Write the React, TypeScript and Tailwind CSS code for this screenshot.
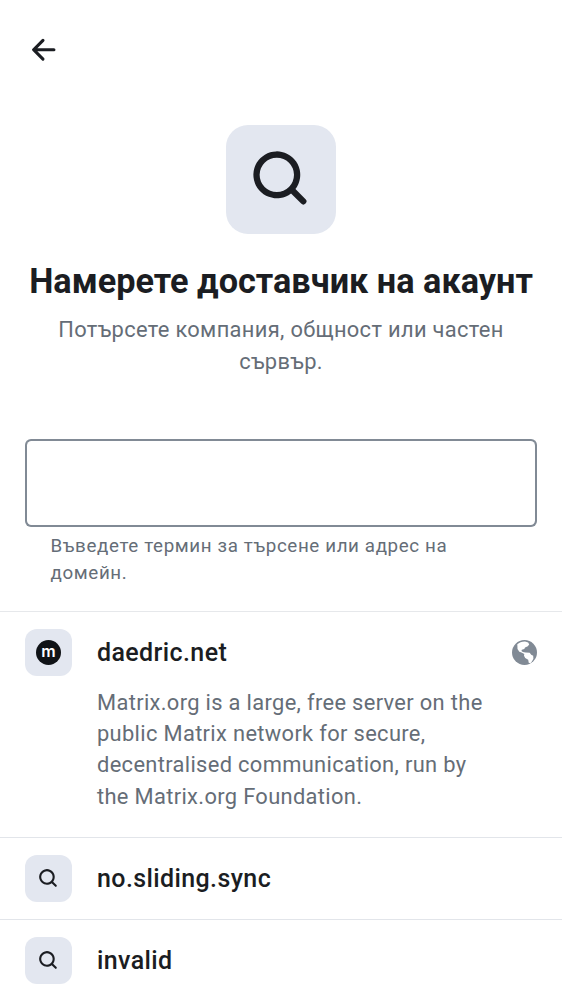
const BODY = "text-[#656d77]";

function SearchGlyph({ className }: { className: string }) {
  return (
    <svg className={className} viewBox="0 0 24 24" fill="currentColor" aria-hidden="true">
      <path d="M15.05 16.463a7.5 7.5 0 1 1 1.414-1.414l3.243 3.244a1 1 0 0 1-1.414 1.414zM16 10.5a5.5 5.5 0 1 0-11 0 5.5 5.5 0 0 0 11 0" />
    </svg>
  );
}

function Tile({ children }: { children: React.ReactNode }) {
  return <div className="flex size-[47px] shrink-0 items-center justify-center rounded-[12px] bg-[#e3e7f0] text-[#1b1d22]">{children}</div>;
}

export default function App() {
  return (
    <main className="flex h-[1000px] w-[562px] flex-col overflow-hidden bg-white text-[#1b1d22]" style={{ fontFamily: "Roboto, sans-serif" }}>
      <header className="flex h-[125px] shrink-0 px-[25px] pt-[31.25px]">
        <svg className="size-[37.5px]" viewBox="0 0 24 24" fill="currentColor" aria-hidden="true">
          <path d="m12.207 5.293a1 1 0 0 1 0 1.414L7.914 11H18.5a1 1 0 1 1 0 2H7.914l4.293 4.293a1 1 0 0 1-1.414 1.414l-6-6a1 1 0 0 1 0-1.414l6-6a1 1 0 0 1 1.414 0" />
        </svg>
      </header>
      <section className="flex h-[314px] shrink-0 flex-col items-center">
        <div className="flex size-[109.4px] shrink-0 items-center justify-center rounded-[22px] bg-[#e3e7f0] pl-[1px]">
          <SearchGlyph className="size-[75px]" />
        </div>
        <h1 className="mt-[25.6px] whitespace-nowrap text-[34.25px] leading-[42px] font-bold">Намерете доставчик на акаунт</h1>
        <p className={`mt-[12px] text-center text-[21.875px] leading-[32px] tracking-[0.33px] ${BODY}`}>
          Потърсете компания, общност или частен<br />сървър.
        </p>
      </section>
      <section className="flex h-[172px] shrink-0 flex-col px-[25px]">
        <div className="flex h-[87.5px] w-full shrink-0 rounded-[6px] bg-[#818a95] p-[1.56px]">
          <input aria-label="Търсене" className="w-full rounded-[4.5px] bg-white px-6 outline-none" />
        </div>
        <p className={`mt-[6.5px] pl-[25.5px] text-[18.75px] leading-[27px] tracking-[0.63px] ${BODY}`}>
          Въведете термин за търсене или адрес на<br />домейн.
        </p>
      </section>
      <section className="flex h-[226px] shrink-0 flex-col border-t border-[#e6e8eb] px-[25px] pt-[17px]">
        <div className="flex items-center">
          <Tile>
            <div className="flex size-[25px] items-center justify-center rounded-full bg-[#101317] pb-[2.5px] text-[16px] leading-none font-semibold text-white" style={{ fontFamily: "Inter, sans-serif" }}>m</div>
          </Tile>
          <h2 className="ml-[25px] text-[25px] leading-[32px] font-medium tracking-[0.39px]">daedric.net</h2>
          <svg className="ml-auto size-[25px] text-[#818a95]" viewBox="0 0 25 25" aria-hidden="true">
            <circle cx="12.5" cy="12.5" r="12.5" fill="currentColor" />
            <path fill="white" d="M5.3 4.2C7 2.5 9.7 1.5 13 1.4l3.2 1 1 2-1.4 1.8-2.8 1.3-.7 1.5-2.5.8-.3 1.2 1.4.9 2.6.5 4.2.4 1.5 2 2 1 .2 3-1.5 2.7-1.5 1.8-1.7-.5-.5-3-3-1.8-1.2-2.2.3-1.7-2.8-1.7-2.2-.6-1.8-2.8z" />
          </svg>
        </div>
        <p className={`mt-[11px] ml-[72px] whitespace-nowrap text-[21.875px] leading-[31.2px] tracking-[0.34px] ${BODY}`}>
          Matrix.org is a large, free server on the<br />public Matrix network for secure,<br />decentralised communication, run by<br />the Matrix.org Foundation.
        </p>
      </section>
      {["no.sliding.sync", "invalid"].map((name) => (
        <section key={name} className="flex h-[82px] shrink-0 items-center border-t border-[#e2e5ea] px-[25px]">
          <Tile><SearchGlyph className="size-[25px]" /></Tile>
          <h2 className="ml-[25px] text-[25px] leading-[32px] font-medium tracking-[0.39px]">{name}</h2>
        </section>
      ))}
    </main>
  );
}
